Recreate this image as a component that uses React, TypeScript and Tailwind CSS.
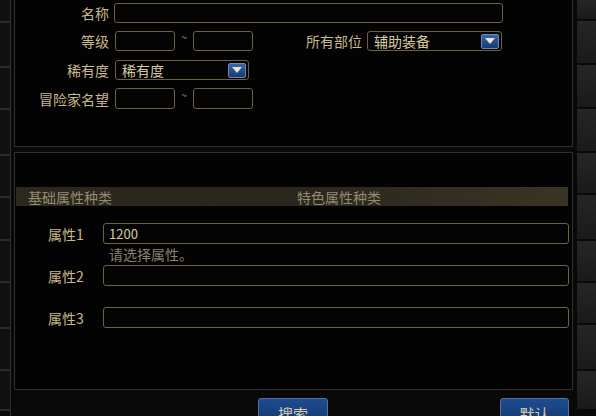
import type { ReactNode } from 'react'

const font = { fontFamily: '"Noto Sans CJK SC", "Liberation Sans", sans-serif' }

const leftTiles = [23, 45, 42, 46, 42, 43, 42, 46, 42, 40]
const rightTiles = [21, 44, 44, 44, 42, 46, 42, 42, 46, 40]

function TextBox({ className = '', children }: { className?: string; children?: ReactNode }) {
  return (
    <div
      className={`flex h-[20px] items-center rounded-[3px] border border-[#6e5f45] bg-[#040404] px-[5px] text-[13px] leading-none text-[#d9c9a0] ${className}`}
    >
      {children}
    </div>
  )
}

function Select({ value, className = '' }: { value: string; className?: string }) {
  return (
    <div
      className={`flex h-[20px] items-center justify-between rounded-[3px] border border-[#6e5f45] bg-[#040404] pl-[6px] pr-[2px] text-[14px] leading-none text-[#d9c9a0] ${className}`}
    >
      <span>{value}</span>
      <span className="flex h-[15px] w-[18px] items-center justify-center rounded-[2px] border border-[#6f88b8] bg-gradient-to-b from-[#3566ad] to-[#163a74]">
        <svg width="10" height="6" viewBox="0 0 10 6">
          <path d="M0 0 H10 L5 6 Z" fill="#ece2c6" />
        </svg>
      </span>
    </div>
  )
}

function Label({ children, className = '' }: { children: ReactNode; className?: string }) {
  return <div className={`text-right text-[14px] leading-none text-[#c8b88d] ${className}`}>{children}</div>
}

function AttrLabel({ children }: { children: ReactNode }) {
  return <div className="ml-[32px] w-[55px] text-[14px] leading-none text-[#c8b88d]">{children}</div>
}

function Tilde() {
  return <span className="w-[18px] -translate-y-[4px] text-center text-[10px] leading-none text-[#9a8e72]">~</span>
}

function Strip({ tiles, right }: { tiles: number[]; right?: boolean }) {
  return (
    <div className="flex flex-col">
      {tiles.map((h, i) => (
        <div
          key={i}
          style={{ height: h }}
          className={
            right
              ? 'shrink-0 border-b-2 border-[#0a0a0a] bg-gradient-to-b from-[#262626] to-[#1a1a1a]'
              : 'shrink-0 border-b-2 border-[#2b2b2b] bg-[#111111]'
          }
        />
      ))}
    </div>
  )
}

export default function App() {
  return (
    <div style={font} className="flex h-[416px] w-[596px] overflow-hidden bg-[#090909]">
      <div className="w-[10px] shrink-0">
        <Strip tiles={leftTiles} />
      </div>
      <div className="w-[3px] shrink-0 border-l border-[#2e2e2e] bg-[#070707]" />

      <div className="flex w-[561px] shrink-0 flex-col">
        {/* filters */}
        <section className="ml-[1px] h-[147px] w-[559px] shrink-0 border-x border-b border-[#2f2f2f] bg-[#030303] pt-[3px]">
          <div className="flex items-center">
            <Label className="w-[94px]">名称</Label>
            <TextBox className="ml-[5px] w-[389px]" />
          </div>
          <div className="mt-[8px] flex items-center">
            <Label className="w-[94px]">等级</Label>
            <TextBox className="ml-[6px] w-[60px]" />
            <Tilde />
            <TextBox className="w-[60px]" />
            <Label className="ml-[51px] w-[58px]">所有部位</Label>
            <Select value="辅助装备" className="ml-[5px] w-[135px]" />
          </div>
          <div className="mt-[9px] flex items-center">
            <Label className="w-[94px]">稀有度</Label>
            <Select value="稀有度" className="ml-[6px] w-[134px]" />
          </div>
          <div className="mt-[8px] flex items-center">
            <Label className="w-[94px]">冒险家名望</Label>
            <TextBox className="ml-[6px] w-[60px] !h-[21px]" />
            <Tilde />
            <TextBox className="w-[60px] !h-[21px]" />
          </div>
        </section>

        {/* attributes */}
        <section className="ml-[1px] mt-[5px] h-[238px] w-[559px] shrink-0 border border-[#2f2f2f] bg-[#030303] pl-[1px] pt-[34px]">
          <div className="flex h-[19px] w-[552px] items-center bg-gradient-to-r from-[#2c281d] via-[#2a261c] to-[#3a3425] text-[14px] leading-none text-[#958b72]">
            <span className="ml-[12px] w-[269px]">基础属性种类</span>
            <span>特色属性种类</span>
          </div>

          <div className="mt-[17px] flex items-center">
            <AttrLabel>属性1</AttrLabel>
            <TextBox className="w-[466px] !h-[21px]">1200</TextBox>
          </div>
          <div className="ml-[93px] mt-[3px] text-[14px] leading-none text-[#878070]">请选择属性。</div>
          <div className="mt-[4px] flex items-center">
            <AttrLabel>属性2</AttrLabel>
            <TextBox className="w-[466px] !h-[21px]" />
          </div>
          <div className="mt-[21px] flex items-center">
            <AttrLabel>属性3</AttrLabel>
            <TextBox className="w-[466px] !h-[21px]" />
          </div>
        </section>

        <div className="mt-[8px] flex shrink-0">
          <button className="ml-[245px] h-[26px] w-[70px] rounded-t-[3px] border border-[#5b6f98] bg-gradient-to-b from-[#1d4c92] to-[#14386e] pt-[4px] text-[15px] leading-none text-[#d8ccaa]">
            搜索
          </button>
          <button className="ml-[172px] h-[26px] w-[69px] rounded-t-[3px] border border-[#5b6f98] bg-gradient-to-b from-[#1d4c92] to-[#14386e] pt-[4px] text-[15px] leading-none text-[#d8ccaa]">
            默认
          </button>
        </div>
      </div>

      <div className="ml-[3px] w-[19px] shrink-0">
        <Strip tiles={rightTiles} right />
      </div>
    </div>
  )
}
